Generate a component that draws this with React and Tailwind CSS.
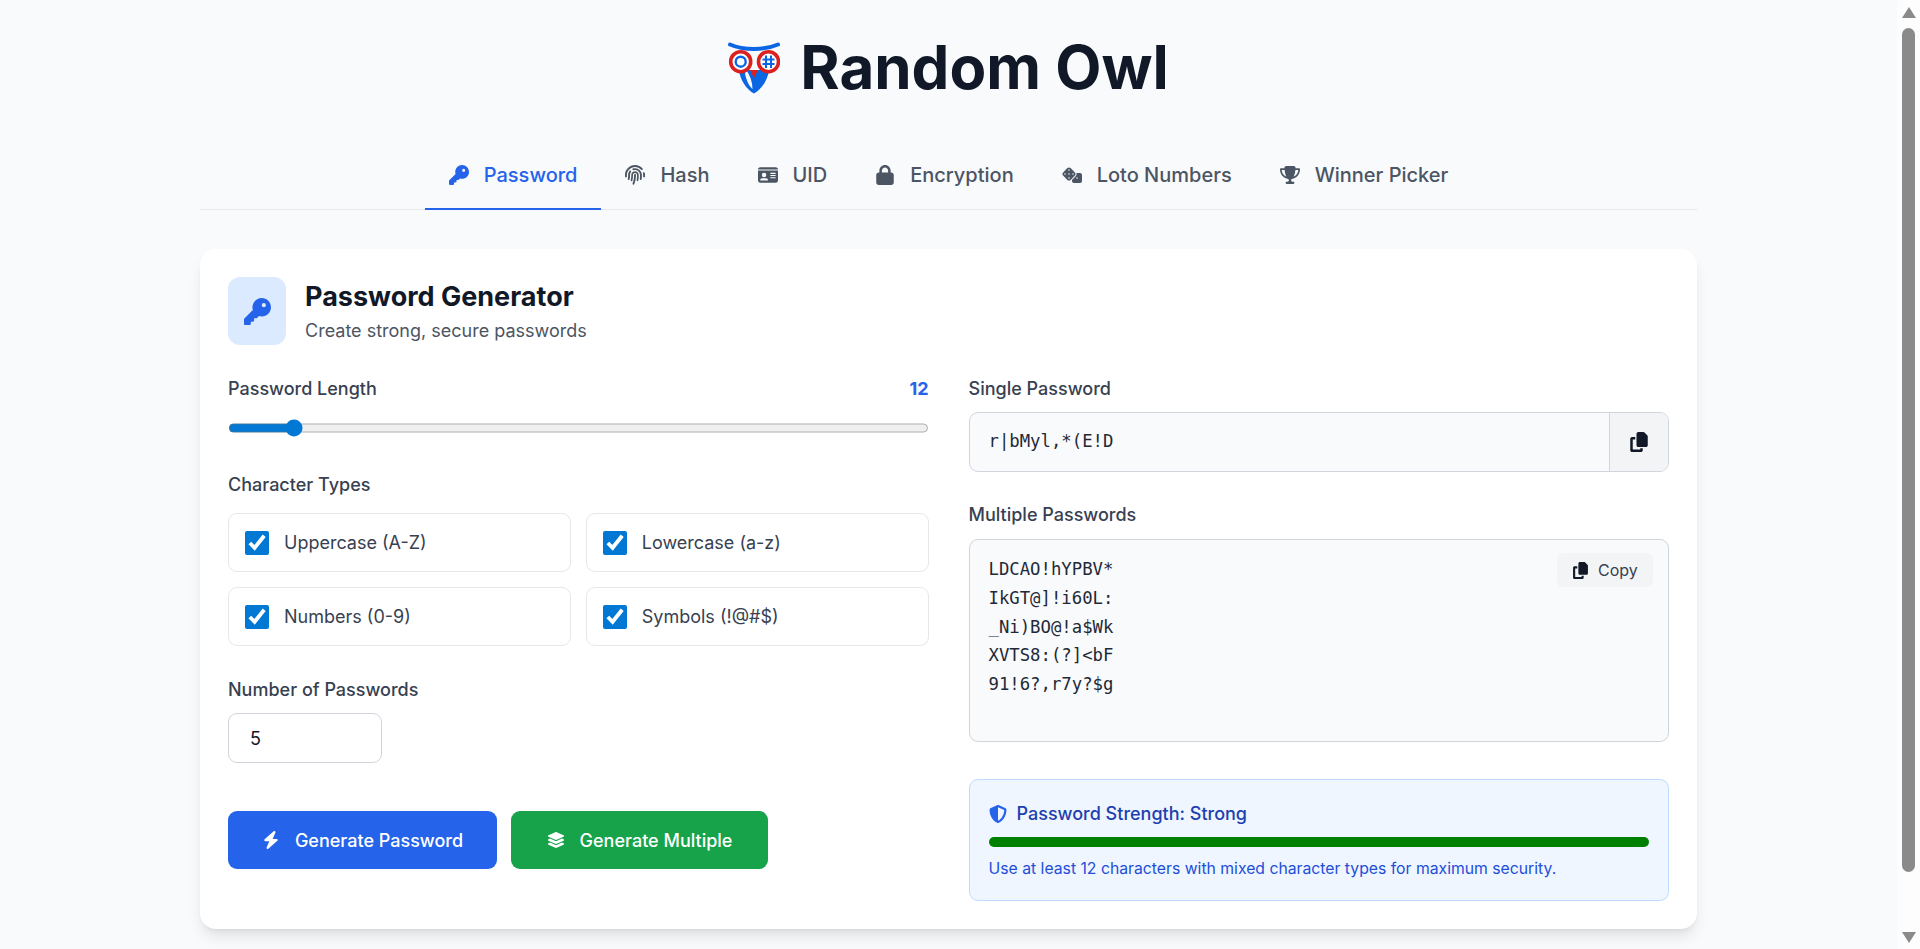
import { FaKey, FaFingerprint, FaIdCard, FaLock, FaDice, FaTrophy, FaCopy, FaBolt, FaLayerGroup, FaShieldHalved } from "react-icons/fa6";

const tabs = [
	{ label: "Password", icon: FaKey, active: true },
	{ label: "Hash", icon: FaFingerprint },
	{ label: "UID", icon: FaIdCard },
	{ label: "Encryption", icon: FaLock },
	{ label: "Loto Numbers", icon: FaDice },
	{ label: "Winner Picker", icon: FaTrophy },
];

const charTypes = ["Uppercase (A-Z)", "Lowercase (a-z)", "Numbers (0-9)", "Symbols (!@#$)"];

const passwords = ["LDCAO!hYPBV*", "IkGT@]!i60L:", "_Ni)BO@!a$Wk", "XVTS8:(?]<bF", "91!6?,r7y?$g"];

function OwlLogo() {
	return (
		<svg viewBox="9 11 52 53" className="w-[52px] h-[53px] shrink-0">
			{/* body */}
			<path d="M20 40 C21 50 28 60 35 63.5 C42 60 49 50 50 40 Z" fill="#0b66e4" />
			<path d="M26 43 C27 50 30 56 33.5 59 C33.5 52 31 46 28 41 Z" fill="#f9fafb" />
			{/* brows */}
			<path d="M11 14.5 C19 18 27 19 35 19 C43 19 51 18 59 14.5" fill="none" stroke="#0b66e4" strokeWidth="4" strokeLinecap="round" />
			{/* eyes */}
			<path d="M31 40 L35 48 L39 40 Z" fill="#dc1f1f" />
			<circle cx="21.7" cy="31.7" r="10" fill="#fff" stroke="#dc1f1f" strokeWidth="3.6" />
			<circle cx="49.5" cy="31.7" r="10" fill="#fff" stroke="#dc1f1f" strokeWidth="3.6" />
			<circle cx="21.7" cy="31.7" r="5" fill="none" stroke="#0b66e4" strokeWidth="2.4" />
			<path d="M47 25.5 V38 M52 25.5 V38 M43.5 29.5 H55.5 M43.5 34 H55.5" stroke="#0b66e4" strokeWidth="2" fill="none" />
		</svg>
	);
}

function TabBar() {
	return (
		<div className="flex justify-center h-[68px] border-b border-[#e5e7eb]">
			{tabs.map((tab) => {
				const Icon = tab.icon;
				return (
					<div
						key={tab.label}
						className={`flex items-center gap-[15px] px-6 h-[68px] text-[20px] font-medium border-b-2 ${
							tab.active ? "text-[#2563eb] border-[#2563eb]" : "text-[#4b5563] border-transparent"
						}`}
					>
						<Icon className="text-[20px]" />
						<span>{tab.label}</span>
					</div>
				);
			})}
		</div>
	);
}

function Label({ children }) {
	return <div className="h-[29px] leading-[29px] text-[18px] font-medium text-[#374151]">{children}</div>;
}

function LeftColumn() {
	return (
		<div>
			<div className="flex justify-between items-center">
				<Label>Password Length</Label>
				<span className="text-[18px] font-bold text-[#2563eb]">12</span>
			</div>
			<div className="h-[18px] mt-4 flex items-center">
				<input type="range" min="4" max="100" defaultValue="12" className="w-[623px] h-4 m-0 accent-[#0078d4] [zoom:1.125] block" />
			</div>
			<div className="mt-[33px]">
				<Label>Character Types</Label>
			</div>
			<div className="grid grid-cols-2 gap-x-[15px] gap-y-[15px] mt-[14px]">
				{charTypes.map((name) => (
					<label key={name} className="flex items-center gap-[15px] h-[59px] px-4 bg-white border border-[#e5e7eb] rounded-[9px] text-[18px] text-[#374151]">
						<input type="checkbox" defaultChecked className="w-6 h-6 m-0 accent-[#0078d4]" />
						<span>{name}</span>
					</label>
				))}
			</div>
			<div className="mt-[29px]">
				<Label>Number of Passwords</Label>
			</div>
			<input
				type="number"
				defaultValue="5"
				className="block w-[154px] h-[50px] mt-[9px] px-[21px] border border-[#d1d5db] rounded-[9px] text-[18px] text-[#111827] bg-white outline-none"
			/>
			<div className="flex gap-[14px] mt-12">
				<button className="flex items-center justify-center gap-[15px] w-[269px] h-[58px] rounded-[9px] bg-[#2563eb] text-white text-[18px] font-medium">
					<FaBolt className="text-[18px]" />
					Generate Password
				</button>
				<button className="flex items-center justify-center gap-[15px] w-[257px] h-[58px] rounded-[9px] bg-[#16a34a] text-white text-[18px] font-medium">
					<FaLayerGroup className="text-[18px]" />
					Generate Multiple
				</button>
			</div>
		</div>
	);
}

function RightColumn() {
	return (
		<div>
			<Label>Single Password</Label>
			<div className="flex h-[60px] mt-[9px] border border-[#d1d5db] rounded-[9px] bg-[#f9fafb] overflow-hidden">
				<div className="flex-1 flex items-center px-[19px] font-['DejaVu_Sans_Mono',monospace] text-[17.3px] text-[#1f2937]">{"r|bMyl,*(E!D"}</div>
				<div className="w-[59px] flex items-center justify-center bg-[#f3f4f6] border-l border-[#d1d5db] text-[#111827]">
					<FaCopy className="text-[20px]" />
				</div>
			</div>
			<div className="mt-[28px]">
				<Label>Multiple Passwords</Label>
			</div>
			<div className="relative h-[203px] mt-[10px] px-[19px] pt-[15px] border border-[#d1d5db] rounded-[9px] bg-[#f9fafb] font-['DejaVu_Sans_Mono',monospace] text-[17.3px] leading-[28.8px] text-[#1f2937]">
				{passwords.map((pw) => (
					<div key={pw}>{pw}</div>
				))}
				<div className="absolute top-[13px] right-[15px] flex items-center gap-[9px] w-[96px] h-[34px] pl-[15px] rounded-md bg-[#f3f4f6] font-['Inter',sans-serif] text-[16px] text-[#374151]">
					<FaCopy className="text-[17px] text-[#111827]" />
					Copy
				</div>
			</div>
			<div className="h-[122px] mt-[37px] px-[19px] border border-[#bfdbfe] rounded-[9px] bg-[#eff6ff]">
				<div className="flex items-center gap-[10px] h-[29px] mt-[19px] text-[18px] font-medium text-[#1e40af]">
					<FaShieldHalved className="text-[18px] text-[#2563eb]" />
					Password Strength: Strong
				</div>
				<div className="h-[10px] mt-[9px] rounded-full bg-[#008000]" />
				<div className="h-[26px] leading-[26px] mt-[9px] text-[15.75px] text-[#1d4ed8]">Use at least 12 characters with mixed character types for maximum security.</div>
			</div>
		</div>
	);
}

function ScrollStrip() {
	return (
		<div className="w-[23px] shrink-0 bg-[#fdfdfd] flex flex-col items-center pl-[0px]">
			<div className="mt-[7px] w-0 h-0 border-x-[7.5px] border-x-transparent border-b-[11px] border-b-[#8a8a8a]" />
			<div className="mt-[10px] w-[13px] h-[844px] rounded-full bg-[#8a8a8a]" />
			<div className="mt-[60px] w-0 h-0 border-x-[7.5px] border-x-transparent border-t-[11px] border-t-[#8a8a8a]" />
		</div>
	);
}

export default function App() {
	return (
		<div className="flex h-[949px] overflow-hidden bg-[#f9fafb] font-['Inter',sans-serif]">
			<main className="flex-1 px-[200px]">
				<div className="flex items-center justify-center gap-5 h-[74px] mt-[30px]">
					<OwlLogo />
					<h1 className="text-[60px] leading-[74px] font-bold text-[#111827]">Random Owl</h1>
				</div>
				<div className="mt-[38px]">
					<TabBar />
				</div>
				<section className="mt-[39px] p-7 bg-white rounded-2xl shadow-lg">
					<div className="flex gap-[19px] h-[68px]">
						<div className="w-[58px] h-[68px] flex items-center justify-center rounded-xl bg-[#dbeafe] text-[#2563eb]">
							<FaKey className="text-[27px]" />
						</div>
						<div>
							<h2 className="text-[27px] leading-[40px] font-bold text-[#111827]">Password Generator</h2>
							<p className="text-[18px] leading-[28px] text-[#4b5563]">Create strong, secure passwords</p>
						</div>
					</div>
					<div className="grid grid-cols-2 gap-10 mt-[29px]">
						<LeftColumn />
						<RightColumn />
					</div>
				</section>
			</main>
			<ScrollStrip />
		</div>
	);
}
